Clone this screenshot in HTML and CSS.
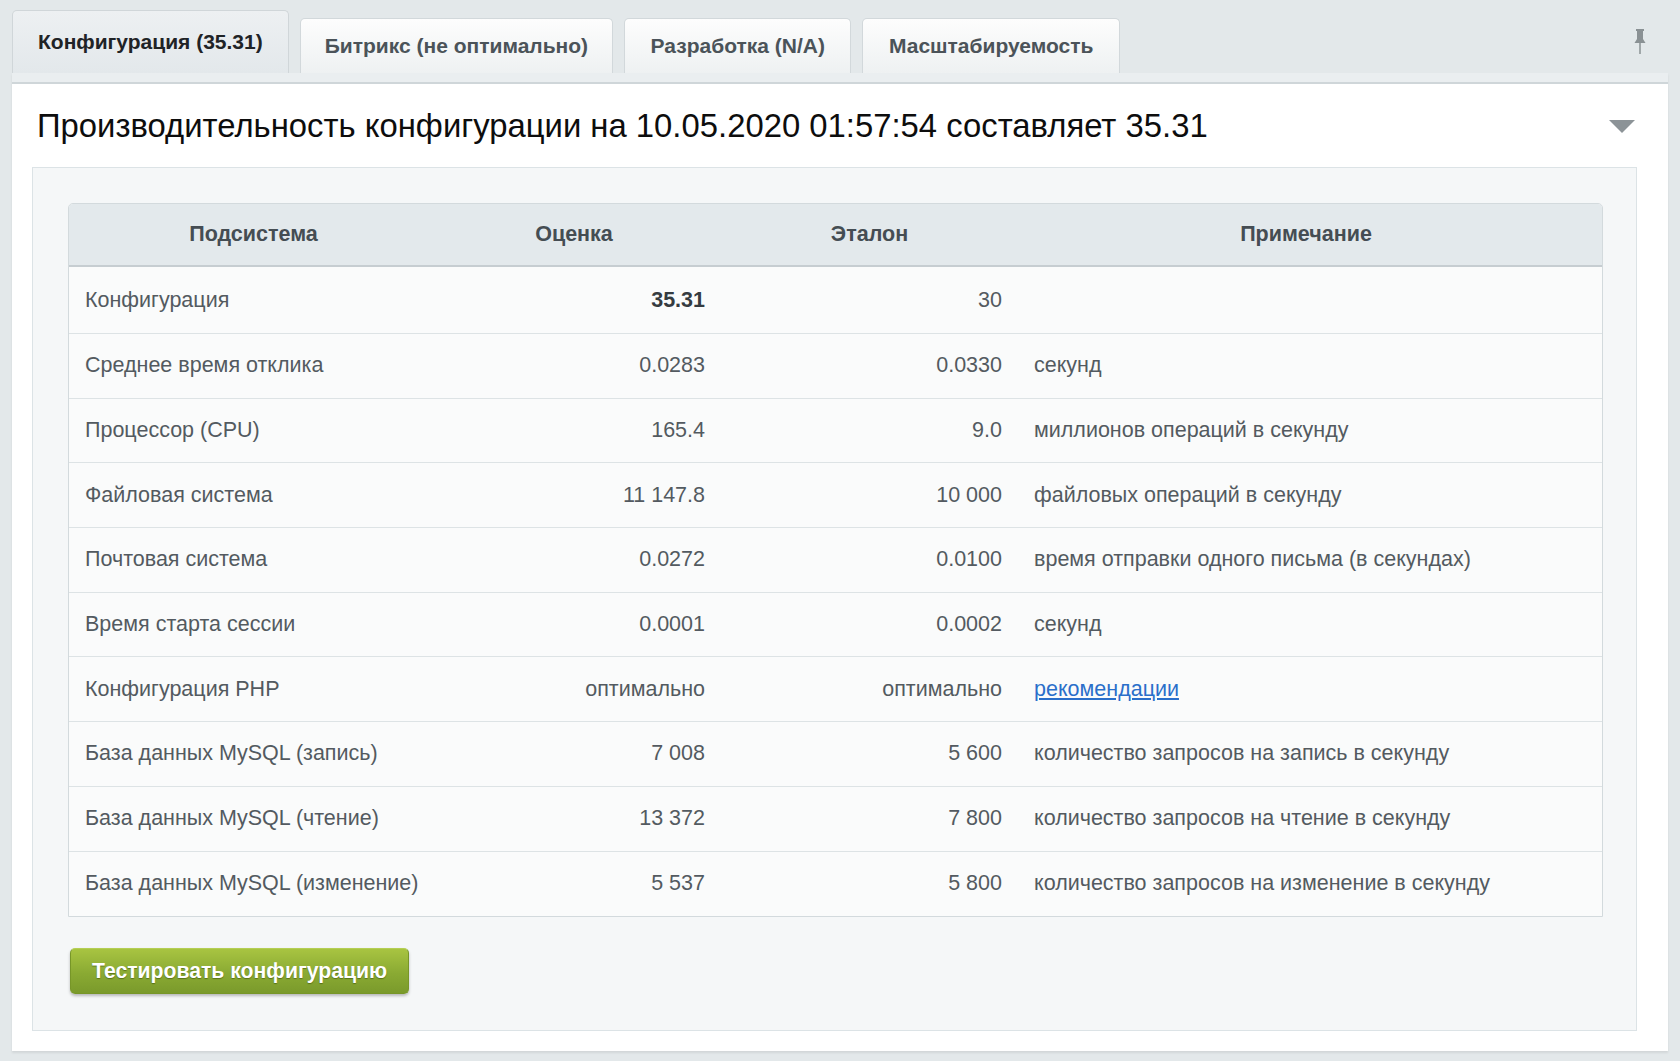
FILE: index.html
```html
<!DOCTYPE html>
<html lang="ru">
<head>
<meta charset="utf-8">
<title>Производительность</title>
<link rel="stylesheet" href="styles.css">
</head>
<body>
<div class="page">
  <div class="tabs">
    <div class="tab tab-active">Конфигурация (35.31)</div>
    <div class="tab">Битрикс (не оптимально)</div>
    <div class="tab tab-wide">Разработка (N/A)</div>
    <div class="tab tab-wide">Масштабируемость</div>
    <div class="pin">
      <svg width="12" height="26" viewBox="0 0 12 26">
        <rect x="2" y="0" width="8" height="2" fill="#8a9194"/>
        <rect x="3" y="2" width="6" height="9" fill="#8a9194"/>
        <polygon points="3,10 9,10 11.5,14 0.5,14" fill="#8a9194"/>
        <rect x="5.25" y="14" width="1.5" height="11" fill="#8a9194"/>
      </svg>
    </div>
  </div>
  <div class="panel">
    <div class="panel-strip"></div>
    <div class="panel-head">
      <h1 class="title">Производительность конфигурации на 10.05.2020 01:57:54 составляет 35.31</h1>
      <span class="collapse"></span>
    </div>
    <div class="inner">
      <div class="table-wrap">
        <table class="grid">
          <colgroup>
            <col class="c1"><col class="c2"><col class="c3"><col class="c4">
          </colgroup>
          <thead>
            <tr><th>Подсистема</th><th class="h2">Оценка</th><th>Эталон</th><th class="h4">Примечание</th></tr>
          </thead>
          <tbody>
            <tr class="first"><td>Конфигурация</td><td class="num"><b>35.31</b></td><td class="num">30</td><td class="note"></td></tr>
            <tr><td>Среднее время отклика</td><td class="num">0.0283</td><td class="num">0.0330</td><td class="note">секунд</td></tr>
            <tr><td>Процессор (CPU)</td><td class="num">165.4</td><td class="num">9.0</td><td class="note">миллионов операций в секунду</td></tr>
            <tr><td>Файловая система</td><td class="num">11 147.8</td><td class="num">10 000</td><td class="note">файловых операций в секунду</td></tr>
            <tr><td>Почтовая система</td><td class="num">0.0272</td><td class="num">0.0100</td><td class="note">время отправки одного письма (в секундах)</td></tr>
            <tr><td>Время старта сессии</td><td class="num">0.0001</td><td class="num">0.0002</td><td class="note">секунд</td></tr>
            <tr><td>Конфигурация PHP</td><td class="num">оптимально</td><td class="num">оптимально</td><td class="note"><a href="#" class="link">рекомендации</a></td></tr>
            <tr><td>База данных MySQL (запись)</td><td class="num">7 008</td><td class="num">5 600</td><td class="note">количество запросов на запись в секунду</td></tr>
            <tr><td>База данных MySQL (чтение)</td><td class="num">13 372</td><td class="num">7 800</td><td class="note">количество запросов на чтение в секунду</td></tr>
            <tr><td>База данных MySQL (изменение)</td><td class="num">5 537</td><td class="num">5 800</td><td class="note">количество запросов на изменение в секунду</td></tr>
          </tbody>
        </table>
      </div>
      <button class="btn-save" type="button">Тестировать конфигурацию</button>
    </div>
  </div>
</div>
</body>
</html>
```

FILE: styles.css
```css
* { box-sizing: border-box; }

html, body {
  margin: 0;
  padding: 0;
}

body {
  background: #e3e8ea;
  font-family: "Liberation Sans", Arial, sans-serif;
  color: #50575d;
  height: 1061px;
  overflow: hidden;
}

.page {
  padding: 0 12px;
}

.tabs {
  display: flex;
  align-items: flex-end;
  height: 73px;
  gap: 11px;
}

.tab {
  height: 55px;
  padding: 0 24px;
  display: flex;
  align-items: center;
  font-size: 21px;
  font-weight: bold;
  color: #4b5359;
  background: linear-gradient(#fdfdfd, #eef1f2);
  border: 1px solid #d2d8db;
  border-bottom: none;
  border-radius: 5px 5px 0 0;
  white-space: nowrap;
}

.tab-wide {
  padding: 0 25.5px;
}

.tab-active {
  height: 63px;
  padding: 0 25px;
  color: #1f2326;
  background: linear-gradient(#edf0f2, #e3e8eb);
  border-color: #d0d6d9;
}

.pin {
  margin-left: auto;
  align-self: flex-start;
  margin-top: 29px;
  margin-right: 22px;
}

.pin svg { display: block; }

.panel {
  background: #fff;
  padding-bottom: 20px;
  box-shadow: 0 2px 2px rgba(0, 0, 0, 0.08);
}

.panel-strip {
  height: 11px;
  background: #eaeef0;
  border-bottom: 2px solid #cfd6d9;
}

.panel-head {
  height: 83px;
  display: flex;
  align-items: center;
  justify-content: space-between;
  padding: 0 33px 0 25px;
}

.title {
  margin: 0;
  font-size: 32.85px;
  font-weight: normal;
  color: #0d0d0d;
  line-height: 40px;
  padding-top: 1px;
}

.collapse {
  width: 0;
  height: 0;
  border-left: 13px solid transparent;
  border-right: 13px solid transparent;
  border-top: 13px solid #8c9397;
  margin-top: 2px;
}

.inner {
  margin: 0 31px 0 20px;
  background: #f5f7f8;
  border: 1px solid #dce3e6;
  padding: 35px 33px 36px 35px;
}

.table-wrap {
  border: 1px solid #d3dadd;
  border-radius: 5px 5px 0 0;
  overflow: hidden;
  background: #fafbfb;
}

.grid {
  width: 100%;
  table-layout: fixed;
  border-collapse: separate;
  border-spacing: 0;
  font-size: 21.5px;
}

.c1 { width: 369px; }
.c2 { width: 283px; }
.c3 { width: 297px; }

.grid thead tr { height: 63px; }

.grid th {
  background: #e3e9ec;
  border-bottom: 2px solid #c6cdd1;
  font-weight: bold;
  color: #454d53;
  text-align: center;
  padding: 0;
}

.grid th.h2 { padding-right: 11px; }
.grid th.h4 { padding-right: 8px; }

.grid tbody tr { height: 64.7px; }
.grid tbody tr.first { height: 67px; }

.grid td {
  border-bottom: 1px solid #dde3e5;
  padding: 0 16px;
  white-space: nowrap;
  color: #535a60;
}

.grid tbody tr:last-child td { border-bottom: none; }

.grid td.num { text-align: right; }
.grid td.num b { color: #353b40; }

.link {
  color: #2a6fca;
  text-decoration: underline;
}

.btn-save {
  display: block;
  margin-top: 31px;
  margin-left: 2px;
  height: 46px;
  padding: 0 21px;
  font-family: "Liberation Sans", Arial, sans-serif;
  font-size: 21.2px;
  font-weight: bold;
  color: #fff;
  text-shadow: 0 1px 1px rgba(60, 80, 10, 0.6);
  background: linear-gradient(#a8c441, #8aaa33 55%, #7a9a2b);
  border: 1px solid #779628;
  border-top-color: #b5cf54;
  border-radius: 5px;
  box-shadow: 0 2px 3px rgba(0, 0, 0, 0.25);
}
```
